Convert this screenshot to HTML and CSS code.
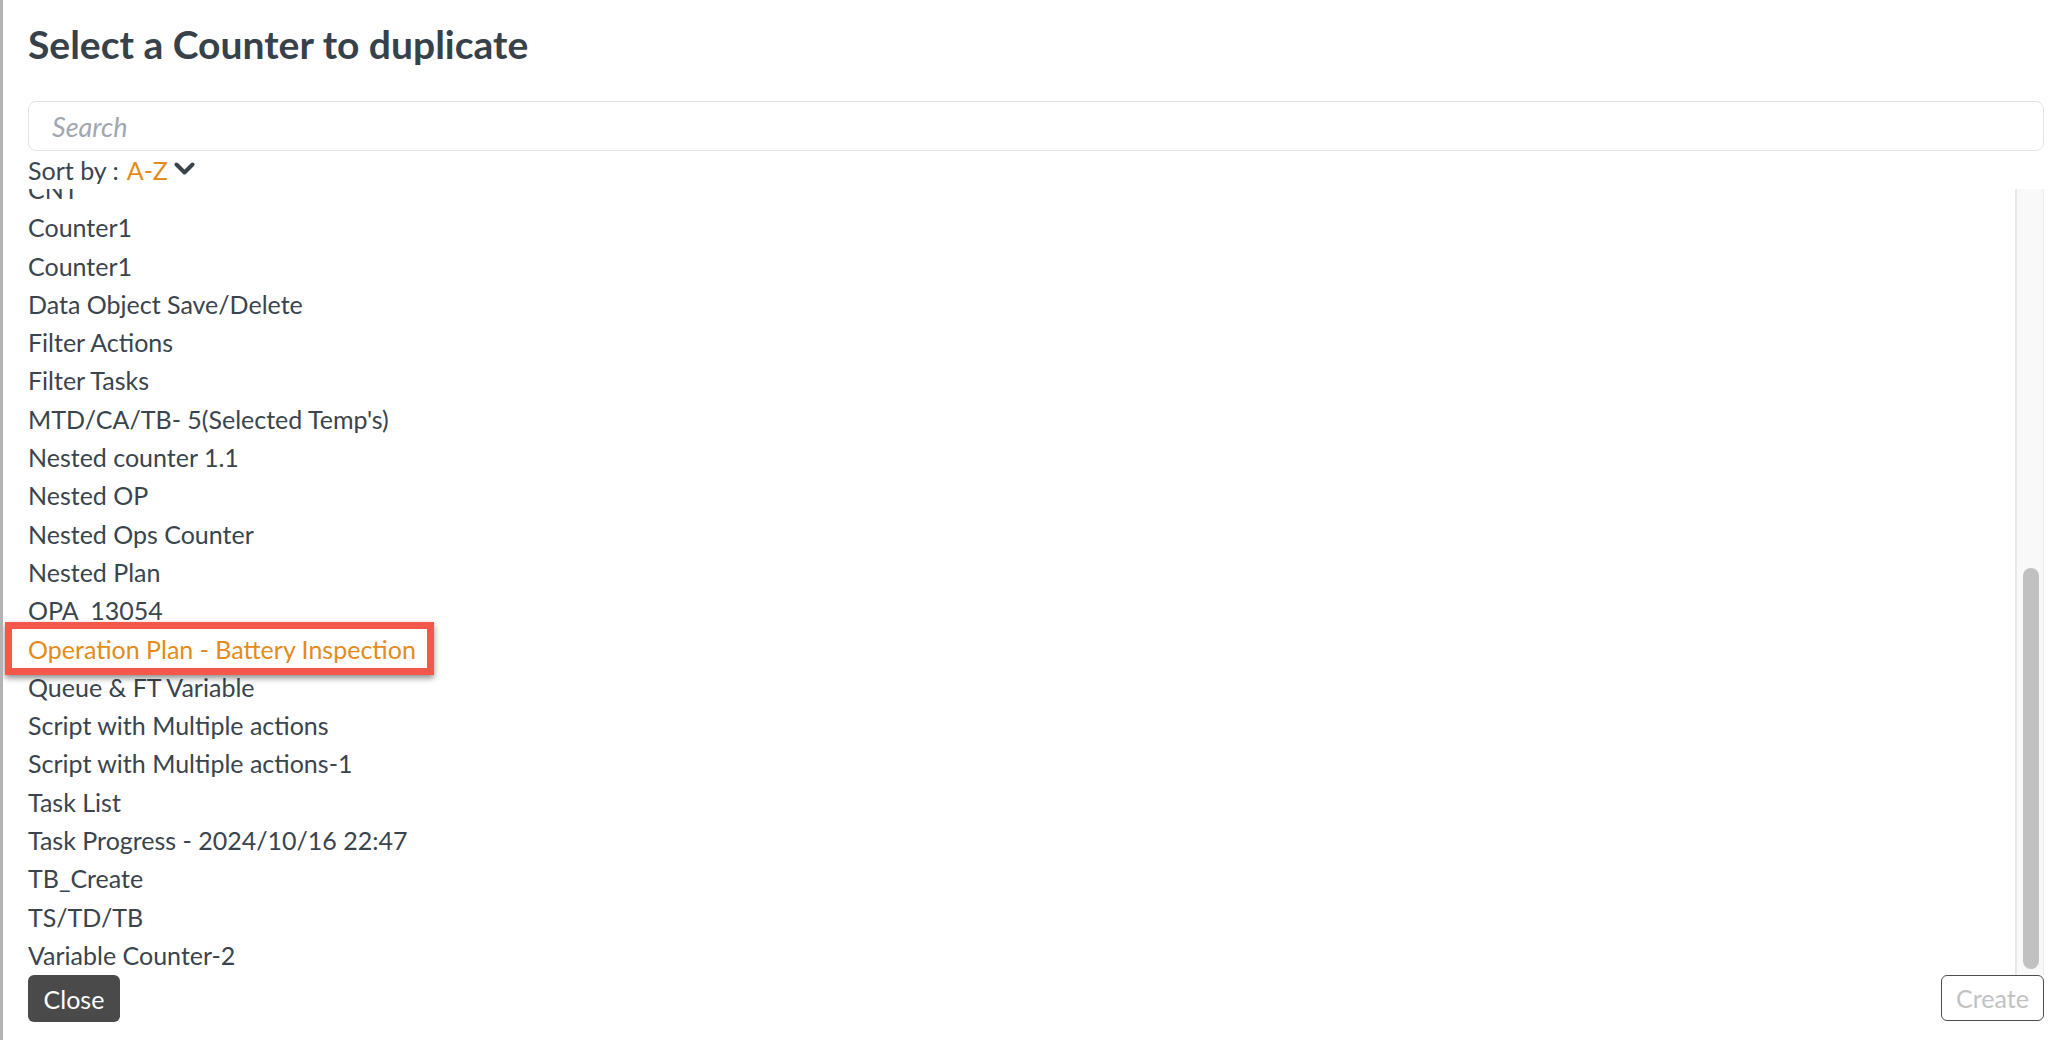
FILE: index.html
```html
<!DOCTYPE html>
<html lang="en">
<head>
    <meta charset="UTF-8">
    <meta name="viewport" content="width=device-width, initial-scale=1.0">
    <title>Select a Counter to duplicate</title>
    <link rel="stylesheet" href="styles.css">
</head>
<body>
    <div class="modal">
        <h1>Select a Counter to duplicate</h1>

        <input class="search" type="text" placeholder="Search">

        <div class="sort-row">
            <span class="sort-label">Sort by :</span>
            <span class="sort-value">A-Z</span>
            <svg class="chevron" width="21" height="14" viewBox="0 0 21 14">
                <path d="M2.5 2.5 L10.5 10.5 L18.5 2.5" fill="none" stroke="#3a444d" stroke-width="4" stroke-linecap="round" stroke-linejoin="round"/>
            </svg>
        </div>

        <div class="list-wrap">
            <ul class="counter-list">
                <li>CNT</li>
                <li>Counter1</li>
                <li>Counter1</li>
                <li>Data Object Save/Delete</li>
                <li>Filter Actions</li>
                <li>Filter Tasks</li>
                <li>MTD/CA/TB- 5(Selected Temp's)</li>
                <li>Nested counter 1.1</li>
                <li>Nested OP</li>
                <li>Nested Ops Counter</li>
                <li>Nested Plan</li>
                <li>OPA_13054</li>
                <li><span class="selected">Operation Plan - Battery Inspection</span></li>
                <li>Queue &amp; FT Variable</li>
                <li>Script with Multiple actions</li>
                <li>Script with Multiple actions-1</li>
                <li>Task List</li>
                <li>Task Progress - 2024/10/16 22:47</li>
                <li>TB_Create</li>
                <li>TS/TD/TB</li>
                <li>Variable Counter-2</li>
            </ul>
            <div class="scroll-track">
                <div class="scroll-thumb"></div>
            </div>
        </div>

        <div class="footer">
            <button class="btn-close">Close</button>
            <button class="btn-create" disabled>Create</button>
        </div>
    </div>
</body>
</html>
```

FILE: styles.css
```css
* {
    margin: 0;
    padding: 0;
    box-sizing: border-box;
    font-family: Lato, "Open Sans", sans-serif;
}

body {
    background-color: #b3b3b3;
    height: 100vh;
    display: flex;
    overflow: hidden;
}

.modal {
    flex: 1;
    margin-left: 3px;
    background: white;
    height: 100%;
    padding: 22px 14px 18px 0;
    display: flex;
    flex-direction: column;
    color: #3a444d;
}

h1 {
    margin-left: 25px;
    font-size: 39px;
    line-height: 44px;
    font-weight: 700;
    color: #37414a;
}

.search {
    margin: 35px 0 0 25px;
    height: 50px;
    border: 1px solid #e3e3e3;
    border-radius: 8px;
    padding: 0 23px;
    font-size: 27px;
    font-style: italic;
    outline: none;
}

.search::placeholder {
    color: #a1a7b0;
    font-style: italic;
}

.sort-row {
    margin-left: 25px;
    height: 38px;
    font-size: 25px;
    display: flex;
    align-items: center;
}

.sort-value {
    margin-left: 8px;
    color: #e38b1b;
}

.chevron {
    margin-left: 6px;
    margin-top: -3px;
}

.list-wrap {
    flex: 1;
    display: flex;
    min-height: 0;
}

.counter-list {
    flex: 1;
    list-style: none;
    overflow: hidden;
    padding-left: 25px;
}

.counter-list li {
    font-size: 25px;
    line-height: 38.3px;
    height: 38.3px;
    white-space: nowrap;
}

.counter-list li:first-child {
    margin-top: -19px;
}

.selected {
    position: relative;
    color: #e38b1b;
}

/* red annotation box around the picked row */
.selected::after {
    content: "";
    position: absolute;
    top: -12px;
    bottom: -11px;
    left: -23px;
    right: -18px;
    border: 7px solid #f4584a;
    box-shadow: 0 3px 6px rgba(0, 0, 0, 0.45);
}

.scroll-track {
    width: 29px;
    background-color: #f9f9f9;
    border-left: 2px solid #e8e8e8;
    border-right: 1px solid #ececec;
    padding: 379px 4px 6px 6px;
    display: flex;
}

.scroll-thumb {
    flex: 1;
    background-color: #c1c1c1;
    border-radius: 8px;
}

.footer {
    margin-left: 25px;
    display: flex;
    justify-content: space-between;
}

.btn-close {
    background-color: #4a4a4a;
    color: white;
    border: none;
    border-radius: 6px;
    width: 92px;
    height: 47px;
    font-size: 25px;
}

.btn-create {
    background: white;
    color: #c2c2c2;
    border: 1px solid #4d4d4d;
    border-radius: 6px;
    width: 103px;
    height: 46px;
    font-size: 25px;
}
```
